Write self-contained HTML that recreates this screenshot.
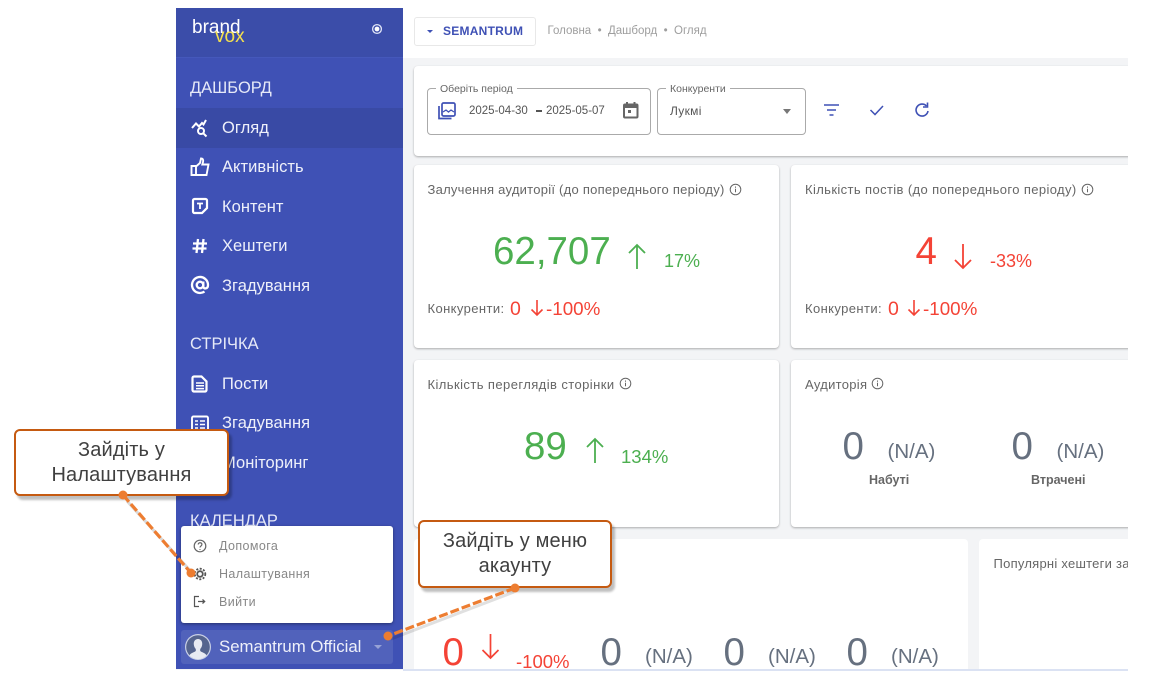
<!DOCTYPE html>
<html lang="uk"><head><meta charset="utf-8"><title>Semantrum</title>
<style>
html,body{margin:0;padding:0;background:#fff}
body{width:1154px;height:680px;position:relative;overflow:hidden;font-family:"Liberation Sans",sans-serif;color:#666}
.a{position:absolute;white-space:nowrap}
.card{position:absolute;background:#fff;border-radius:4px;box-shadow:0 1px 2px rgba(0,0,0,.3)}
.nav{color:#eef0fa;font-size:16.5px;left:222px;letter-spacing:.05px}
.sec{color:#e6e9f8;font-size:16.5px;left:190px}
.t{font-size:13px;color:#666;letter-spacing:.25px}
.g{color:#4caf50}.r{color:#f44336}.s{color:#66707f}
.big{font-size:38.5px}.na{font-size:20.5px}
.call{position:absolute;background:#fff;border:2px solid #c55a11;border-radius:6px;box-shadow:3px 4px 2px rgba(0,0,0,.25);text-align:center;color:#404040;font-size:20px;line-height:25px;letter-spacing:.15px;box-sizing:border-box}
svg{position:absolute;overflow:visible}
</style></head><body>
<div class="a" style="left:176px;top:8px;width:952px;height:662px;background:#f3f4f6;overflow:hidden"></div>
<div class="a" style="left:403px;top:8px;width:725px;height:50px;background:#fff"></div>

<div class="a" style="left:176px;top:8px;width:227px;height:661px;background:#3f51b5"></div>
<div class="a" style="left:176px;top:8px;width:227px;height:49px;background:#3b4da9;border-bottom:1px solid #4558bb"></div>
<div class="a" style="left:176px;top:108px;width:227px;height:40px;background:#394aa5"></div>

<div class="a" style="left:192px;top:17px;font-size:19px;color:#fff">brand</div>
<div class="a" style="left:215px;top:26px;font-size:19px;color:#f4e04d">vox</div>
<svg style="left:371px;top:23px" width="12" height="12"><circle cx="6" cy="6" r="4.4" fill="none" stroke="#dfe4f7" stroke-width="1.3"/><circle cx="6" cy="6" r="2.4" fill="#fff"/></svg>

<div class="a sec" style="top:79px">ДАШБОРД</div>
<svg style="left:190px;top:118px" width="20" height="20" fill="none" stroke="#fff" stroke-width="2"><path d="M2 10l4-4.500 3 3 3-3.500 1.500 1.500L16 2"/><circle cx="11" cy="13" r="3"/><path d="M13.200 15.200L16.500 18.500"/></svg>
<div class="a nav" style="top:119px">Огляд</div>
<svg style="left:190px;top:157px" width="20" height="20" fill="none" stroke="#fff" stroke-width="1.900"><path d="M1.500 9h4.500v9H1.500zM6 9.500l4-3.500 1-4.500c2 0 2.500 1.500 2 3.500l-.7 2.500H18.500l-2 10.500H6"/></svg>
<div class="a nav" style="top:158px">Активність</div>
<svg style="left:191px;top:197px" width="18" height="18" fill="none" stroke="#fff" stroke-width="2.200"><path d="M3.500 2h11A1.500 1.500 0 0 1 16 3.500V11l-5 5H3.500A1.500 1.500 0 0 1 2 14.500v-11A1.500 1.500 0 0 1 3.500 2z"/><path d="M6 6.500h6M9 6.500V12" stroke-width="1.800"/></svg>
<div class="a nav" style="top:198px">Контент</div>
<svg style="left:191px;top:237px" width="18" height="18" fill="none" stroke="#fff" stroke-width="2.300"><path d="M2 6.500h14M1.500 11.500h14M7 2L5.500 16M12.500 2L11 16"/></svg>
<div class="a nav" style="top:237px">Хештеги</div>
<svg style="left:190px;top:275px" width="20" height="20" fill="none" stroke="#fff" stroke-width="2.300"><circle cx="10" cy="10" r="3.300"/><path d="M13.300 6.500v5c0 2.800 4.700 2.800 4.700-1.500a8 8 0 1 0-3.500 6.600"/></svg>
<div class="a nav" style="top:277px">Згадування</div>

<div class="a sec" style="top:335px">СТРІЧКА</div>
<svg style="left:191px;top:375px" width="18" height="18" fill="none" stroke="#fff" stroke-width="2.200"><path d="M3 1.500h7.500L15.500 6.500V15a1.500 1.500 0 0 1-1.500 1.500H3A1.500 1.500 0 0 1 1.500 15V3A1.500 1.500 0 0 1 3 1.500z"/><path d="M5 8h8M5 10.800h8M5 13.600h8" stroke-width="1.500"/></svg>
<div class="a nav" style="top:375px">Пости</div>
<svg style="left:191px;top:415px" width="18" height="18" fill="none" stroke="#fff" stroke-width="1.900"><rect x="1" y="1.500" width="16" height="15" rx="1.500"/><path d="M4 6h3M9 6h5M4 9.500h3M9 9.500h5M4 13h3M9 13h5" stroke-width="1.600"/></svg>
<div class="a nav" style="top:414px">Згадування</div>
<div class="a nav" style="top:454px">Моніторинг</div>
<div class="a sec" style="top:512px">КАЛЕНДАР</div>

<div class="a" style="left:181px;top:526px;width:212px;height:97px;background:#fff;border-radius:3px;box-shadow:0 1px 3px rgba(0,0,0,.4)"></div>
<svg style="left:193px;top:539px" width="14" height="14" fill="none" stroke="#666" stroke-width="1.200"><circle cx="7" cy="7" r="5.800"/><path d="M5.200 5.500c0-2.300 3.700-2.300 3.700 0 0 1.500-1.900 1.500-1.900 3M7 10v.9"/></svg>
<div class="a" style="left:219px;top:538.500px;font-size:12.500px;color:#888;letter-spacing:.4px">Допомога</div>
<svg style="left:193px;top:567px" width="14" height="14" fill="none" stroke="#555" stroke-width="1.800"><circle cx="7" cy="7" r="2.800"/><circle cx="7" cy="7" r="5.300" stroke-dasharray="2 1.500"/></svg>
<div class="a" style="left:219px;top:566.500px;font-size:12.500px;color:#888;letter-spacing:.4px">Налаштування</div>
<svg style="left:193px;top:595px" width="14" height="14" fill="none" stroke="#555" stroke-width="1.200"><path d="M6 1.500H1.500v10H6"/><path d="M5 6.500h6.500M9.500 4.500l2.200 2-2.200 2"/></svg>
<div class="a" style="left:219px;top:594.500px;font-size:12.500px;color:#888;letter-spacing:.4px">Вийти</div>

<div class="a" style="left:181px;top:630px;width:212px;height:34px;background:#5162bb;border-radius:3px"></div>
<svg style="left:185px;top:634px" width="26" height="26"><circle cx="13" cy="13" r="13" fill="#c9d0e6"/><circle cx="13" cy="13" r="11.800" fill="#55648e"/><path d="M13 5c3 0 4.500 2.500 4.200 5.500-.2 2-1 3.500-2 4.500v2c1 1.200 5.500 2 6.300 4.500a11.800 11.800 0 0 1-17 0c.8-2.500 5.300-3.300 6.300-4.500v-2c-1-1-1.800-2.500-2-4.500C8.500 7.500 10 5 13 5z" fill="#e8eaf2"/></svg>
<div class="a" style="left:219px;top:637px;font-size:16.800px;color:#eef0fa">Semantrum Official</div>
<div class="a" style="left:374px;top:645px;width:0;height:0;border:4px solid transparent;border-top:4px solid #97a2d6"></div>

<div class="a" style="left:414px;top:17px;width:120px;height:27px;border:1px solid #e8e8e8;border-radius:3px;background:#fff"></div>
<div class="a" style="left:427px;top:30px;width:0;height:0;border:3px solid transparent;border-top:3px solid #3f51b5"></div>
<div class="a" style="left:443px;top:24px;font-size:12px;font-weight:bold;color:#3f51b5;letter-spacing:.25px">SEMANTRUM</div>
<div class="a" style="left:547.500px;top:25px;font-size:11.500px;color:#9e9e9e">Головна &nbsp;•&nbsp; Дашборд &nbsp;•&nbsp; Огляд</div>

<div class="card" style="left:414px;top:66px;width:730px;height:90px"></div>
<div class="a" style="left:427px;top:88px;width:222px;height:44.500px;border:1px solid #aaa;border-radius:4px"></div>
<div class="a" style="left:436px;top:83px;padding:0 4px;background:#fff;font-size:10.500px;color:#666">Оберіть період</div>
<svg style="left:437px;top:101px" width="20" height="20" fill="none" stroke="#3f51b5" stroke-width="1.700"><rect x="5" y="2" width="13" height="13" rx="1.500"/><path d="M2 5v12.500h12.500"/><path d="M6 11l3-2 2.500 2 2.500-2 3 2" stroke-width="1.300"/></svg>
<div class="a" style="left:469px;top:105px;font-size:11.500px;color:#555">2025-04-30</div>
<div class="a" style="left:536px;top:110px;width:6px;height:2px;background:#555"></div>
<div class="a" style="left:546px;top:105px;font-size:11.500px;color:#555">2025-05-07</div>
<svg style="left:622px;top:101px" width="18" height="18" fill="none" stroke="#666" stroke-width="2"><rect x="2" y="3.500" width="13.500" height="13" rx="1"/><path d="M2 5.500h13.500" stroke-width="3"/><path d="M5 1v3M12.500 1v3"/><rect x="6" y="9" width="3" height="3" fill="#666" stroke="none"/></svg>

<div class="a" style="left:657px;top:88px;width:147px;height:45px;border:1px solid #aaa;border-radius:4px"></div>
<div class="a" style="left:666px;top:83px;padding:0 4px;background:#fff;font-size:10.500px;color:#666">Конкуренти</div>
<div class="a" style="left:670px;top:104px;font-size:12px;color:#555;letter-spacing:.3px">Лукмі</div>
<div class="a" style="left:783px;top:109px;width:0;height:0;border:4px solid transparent;border-top:5px solid #777"></div>
<svg style="left:823px;top:103px" width="16" height="14" fill="none" stroke="#3f51b5" stroke-width="1.400"><path d="M1 2h15M4 7h9M6.500 12h4"/></svg>
<svg style="left:869px;top:104px" width="16" height="12" fill="none" stroke="#3f51b5" stroke-width="1.500"><path d="M1.500 6l4.500 4.500L14 2"/></svg>
<svg style="left:913px;top:102px" width="18" height="16" fill="none" stroke="#3f51b5" stroke-width="1.600"><path d="M13.500 4A6 6 0 1 0 15 9"/><path d="M14.500 .5V5h-4.500" stroke-width="1.600"/></svg>

<div class="card" style="left:414px;top:165px;width:365px;height:183px"></div>
<div class="a t" style="left:427.500px;top:182px">Залучення аудиторії (до попереднього періоду)</div>
<svg style="left:729px;top:183px" width="13" height="13" fill="none" stroke="#666" stroke-width="1"><circle cx="6.500" cy="6.500" r="5.300"/><path d="M6.500 5.800v3.500M6.500 3.500v1.200"/></svg>
<div class="a g big" style="left:493px;top:230px">62,707</div>
<svg style="left:627px;top:243px" width="20" height="27" fill="none" stroke="#4caf50" stroke-width="1.800"><path d="M10 26V2M2 10l8-8 8 8"/></svg>
<div class="a g" style="left:664px;top:251px;font-size:18px">17%</div>
<div class="a t" style="left:427.500px;top:301px;letter-spacing:.4px">Конкуренти:</div>
<div class="a r" style="left:510px;top:298px;font-size:19.500px">0</div>
<svg style="left:530px;top:300px" width="14" height="17" fill="none" stroke="#f44336" stroke-width="1.600"><path d="M7 0v15M1.500 9.500L7 15l5.500-5.500"/></svg>
<div class="a r" style="left:546px;top:298px;font-size:18.800px">-100%</div>

<div class="card" style="left:791px;top:165px;width:353px;height:183px"></div>
<div class="a t" style="left:805px;top:182px;letter-spacing:.38px">Кількість постів (до попереднього періоду)</div>
<svg style="left:1081px;top:183px" width="13" height="13" fill="none" stroke="#666" stroke-width="1"><circle cx="6.500" cy="6.500" r="5.300"/><path d="M6.500 5.800v3.500M6.500 3.500v1.200"/></svg>
<div class="a r big" style="left:915.500px;top:230px">4</div>
<svg style="left:953px;top:243px" width="20" height="27" fill="none" stroke="#f44336" stroke-width="1.800"><path d="M10 1v24M2 17l8 8 8-8"/></svg>
<div class="a r" style="left:990px;top:251px;font-size:18px">-33%</div>
<div class="a t" style="left:805px;top:301px;letter-spacing:.4px">Конкуренти:</div>
<div class="a r" style="left:888px;top:298px;font-size:19.500px">0</div>
<svg style="left:907px;top:300px" width="14" height="17" fill="none" stroke="#f44336" stroke-width="1.600"><path d="M7 0v15M1.500 9.500L7 15l5.500-5.500"/></svg>
<div class="a r" style="left:923px;top:298px;font-size:18.800px">-100%</div>

<div class="card" style="left:414px;top:360px;width:365px;height:167px"></div>
<div class="a t" style="left:427.500px;top:377px;letter-spacing:.42px">Кількість переглядів сторінки</div>
<svg style="left:619px;top:377px" width="13" height="13" fill="none" stroke="#666" stroke-width="1"><circle cx="6.500" cy="6.500" r="5.300"/><path d="M6.500 5.800v3.500M6.500 3.500v1.200"/></svg>
<div class="a g big" style="left:524px;top:425px">89</div>
<svg style="left:585px;top:437px" width="20" height="27" fill="none" stroke="#4caf50" stroke-width="1.800"><path d="M10 26V2M2 10l8-8 8 8"/></svg>
<div class="a g" style="left:621px;top:445.500px;font-size:18.500px">134%</div>

<div class="card" style="left:791px;top:360px;width:353px;height:167px"></div>
<div class="a t" style="left:805px;top:377px;letter-spacing:.3px">Аудиторія</div>
<svg style="left:871px;top:377px" width="13" height="13" fill="none" stroke="#666" stroke-width="1"><circle cx="6.500" cy="6.500" r="5.300"/><path d="M6.500 5.800v3.500M6.500 3.500v1.200"/></svg>
<div class="a s big" style="left:842.500px;top:425px">0</div>
<div class="a s na" style="left:887.500px;top:440px">(N/A)</div>
<div class="a" style="left:869px;top:473px;font-size:12.500px;font-weight:bold;color:#666">Набуті</div>
<div class="a s big" style="left:1011.500px;top:425px">0</div>
<div class="a s na" style="left:1056.500px;top:440px">(N/A)</div>
<div class="a" style="left:1031px;top:473px;font-size:12.500px;font-weight:bold;color:#666">Втрачені</div>

<div class="a" style="left:414px;top:539px;width:554px;height:130px;background:#fff;border-radius:4px 4px 0 0"></div>
<div class="a r big" style="left:442.500px;top:631px">0</div>
<svg style="left:481px;top:633px" width="19" height="26" fill="none" stroke="#f44336" stroke-width="1.700"><path d="M9.500 1v24M1.500 17l8 8 8-8"/></svg>
<div class="a r" style="left:516px;top:651px;font-size:18.500px">-100%</div>
<div class="a s big" style="left:600.500px;top:631px">0</div>
<div class="a s na" style="left:645px;top:645px">(N/A)</div>
<div class="a s big" style="left:723.500px;top:631px">0</div>
<div class="a s na" style="left:768px;top:645px">(N/A)</div>
<div class="a s big" style="left:846.500px;top:631px">0</div>
<div class="a s na" style="left:891px;top:645px">(N/A)</div>

<div class="a" style="left:979px;top:539px;width:165px;height:130px;background:#fff;border-radius:4px 4px 0 0"></div>
<div class="a t" style="left:993.500px;top:556px">Популярні хештеги за</div>

<div class="a" style="left:1128px;top:0;width:26px;height:680px;background:#fff"></div>
<div class="a" style="left:176px;top:670px;width:952px;height:10px;background:#fff"></div>
<div class="a" style="left:403px;top:669px;width:725px;height:1.500px;background:#dbe2f3"></div>

<svg style="left:0;top:0" width="1154" height="680" fill="none">
<path d="M125 499L193 574" stroke="#000" stroke-opacity=".15" stroke-width="3" transform="translate(2,2)"/>
<path d="M513 590L390 637" stroke="#000" stroke-opacity=".12" stroke-width="3" transform="translate(1,2)"/>
</svg>
<div class="call" style="left:14px;top:429px;width:215px;height:67px;padding-top:7px">Зайдіть у<br>Налаштування</div>
<div class="call" style="left:418px;top:520px;width:194px;height:68px;padding-top:7px">Зайдіть у меню<br>акаунту</div>
<svg style="left:0;top:0" width="1154" height="680" fill="none">
<path d="M123 495L191 573" stroke="#ed7d31" stroke-width="3.200" stroke-dasharray="9 3"/>
<path d="M515 588L388 636" stroke="#ed7d31" stroke-width="3.200" stroke-dasharray="9 3"/>
<circle cx="123" cy="495" r="4.500" fill="#ed7d31"/><circle cx="191" cy="573" r="4.500" fill="#ed7d31"/>
<circle cx="515" cy="588" r="4.500" fill="#ed7d31"/><circle cx="388" cy="636" r="4.500" fill="#ed7d31"/>
</svg>
</body></html>
